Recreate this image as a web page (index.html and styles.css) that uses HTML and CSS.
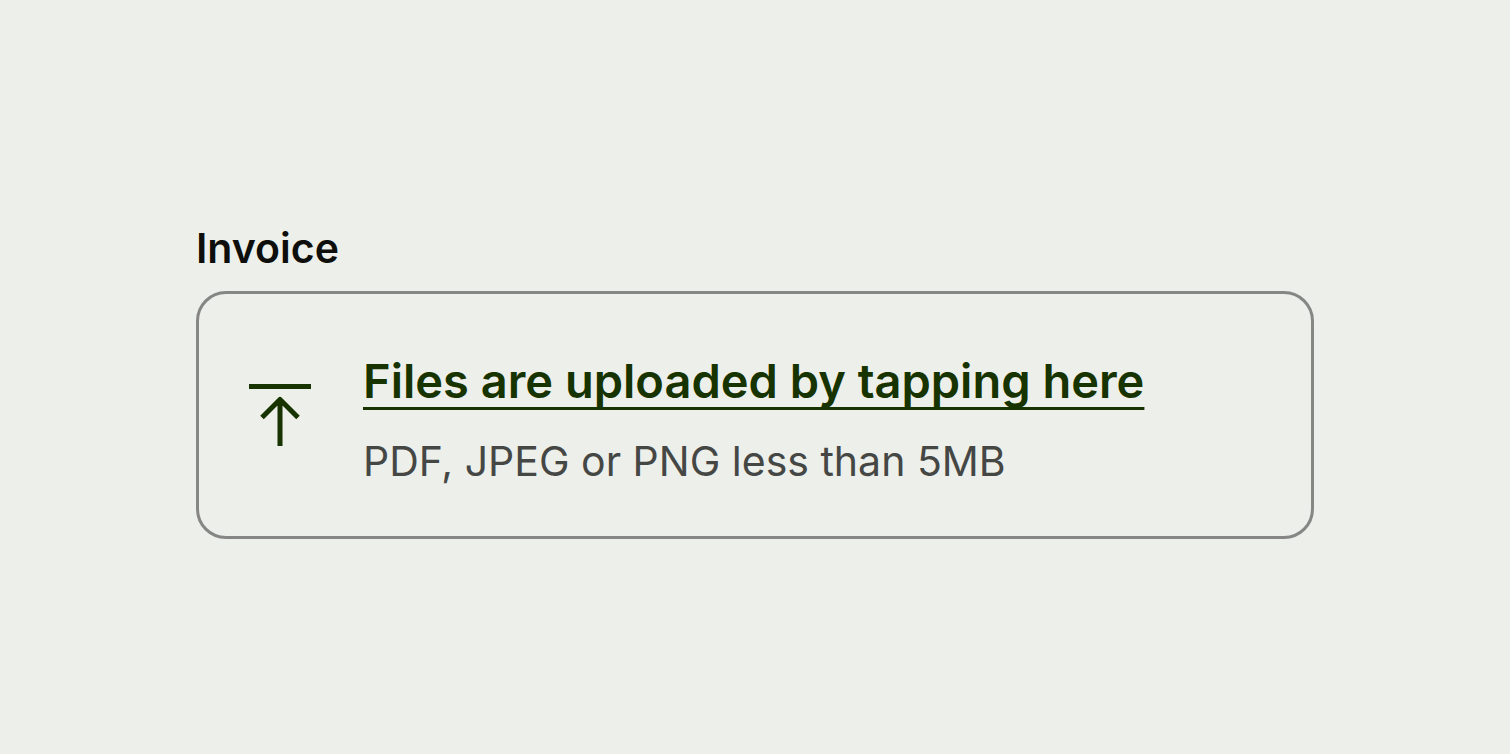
FILE: index.html
```html
<!DOCTYPE html>
<html lang="en">
<head>
  <meta charset="UTF-8">
  <meta name="viewport" content="width=device-width, initial-scale=1.0">
  <title>Invoice upload</title>
  <link rel="stylesheet" href="styles.css">
</head>
<body>
  <main class="field">
    <h1 class="field-label" id="invoice-label">Invoice</h1>
    <button class="upload" type="button" aria-labelledby="invoice-label upload-title">
      <svg class="upload-icon" viewBox="0 0 62 62" aria-hidden="true">
        <path d="M0 2.5H62M31 62V16M13 33.5L31 15.5L49 33.5"/>
      </svg>
      <span class="upload-text">
        <span class="upload-title" id="upload-title">Files are uploaded by tapping here</span>
        <span class="upload-hint">PDF, JPEG or PNG less than 5MB</span>
      </span>
    </button>
  </main>
</body>
</html>
```
FILE: styles.css
```css
* {
  box-sizing: border-box;
}
body {
  margin: 0;
  min-height: 100vh;
  padding: 0 196px;
  display: flex;
  align-items: center;
  background-color: #edefea;
  font-family: Inter, sans-serif;
}
.field {
  width: 100%;
  padding-top: 8px;
}
.field-label {
  margin: 0 0 18px;
  color: #0e0f0c;
  font-size: 41px;
  font-weight: 600;
  line-height: 50px;
}
.upload {
  display: flex;
  align-items: center;
  gap: 52px;
  width: 100%;
  padding: 46px 50px;
  border: 3px solid #868685;
  border-radius: 30px;
  background: none;
  font-family: inherit;
  text-align: left;
  cursor: pointer;
}
.upload-icon {
  flex: none;
  width: 62px;
  height: 62px;
  fill: none;
  stroke: #163300;
  stroke-width: 5;
  stroke-linejoin: round;
}
.upload-text {
  display: flex;
  flex-direction: column;
  align-items: flex-start;
  gap: 20px;
  padding-top: 10px;
}
.upload-title {
  color: #163300;
  font-size: 47px;
  font-weight: 600;
  line-height: 62px;
  text-decoration: underline;
  text-decoration-thickness: 3px;
  text-decoration-skip-ink: none;
  text-underline-offset: 9px;
}
.upload-hint {
  color: #454745;
  font-size: 41px;
  line-height: 58px;
}
```
